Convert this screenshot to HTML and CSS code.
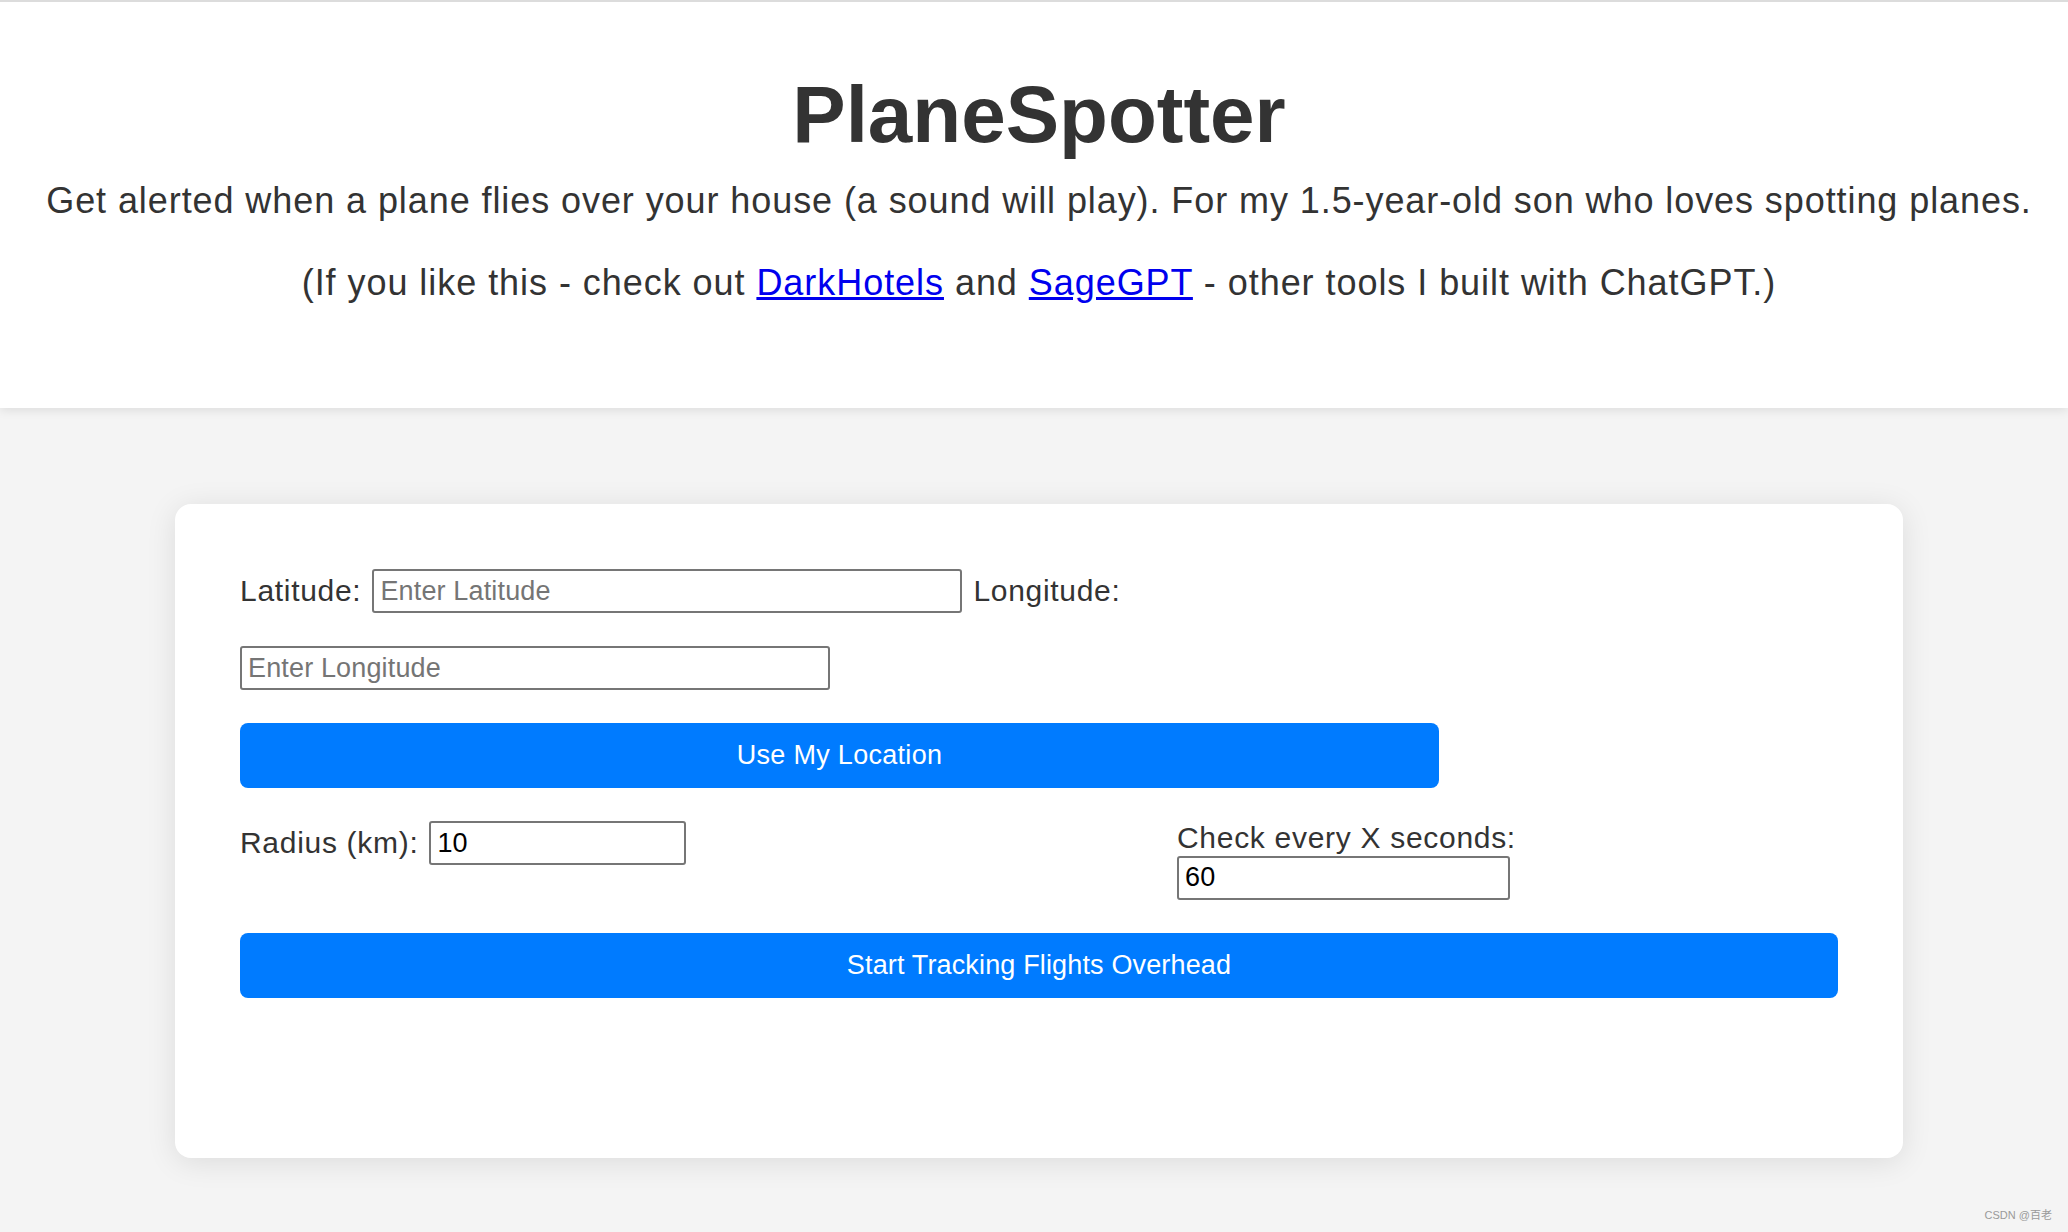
FILE: index.html
```html
<!DOCTYPE html>
<html lang="en">
<head>
<meta charset="utf-8">
<title>PlaneSpotter</title>
<link rel="stylesheet" href="styles.css">
</head>
<body>
<header class="site-header">
  <h1 class="title">PlaneSpotter</h1>
  <p class="lead">Get alerted when a plane flies over your house (a sound will play). For my 1.5-year-old son who loves spotting planes.</p>
  <p class="lead lead-second">(If you like this - check out <a href="#">DarkHotels</a> and <a href="#">SageGPT</a> - other tools I built with ChatGPT.)</p>
</header>
<main class="main">
  <section class="card">
    <div class="coords">
      <label class="label" for="lat">Latitude:</label>
      <input class="field field-wide" id="lat" type="text" placeholder="Enter Latitude">
      <label class="label" for="lon">Longitude:</label>
      <input class="field field-wide" id="lon" type="text" placeholder="Enter Longitude">
    </div>
    <button class="btn btn-location" type="button">Use My Location</button>
    <div class="settings">
      <div class="setting-radius">
        <label class="label" for="radius">Radius (km):</label>
        <input class="field field-radius" id="radius" type="text" value="10">
      </div>
      <div class="setting-interval">
        <label class="label" for="interval">Check every X seconds:</label>
        <input class="field field-interval" id="interval" type="text" value="60">
      </div>
    </div>
    <button class="btn btn-start" type="button">Start Tracking Flights Overhead</button>
  </section>
</main>
<div class="watermark">CSDN @百老</div>
</body>
</html>
```
FILE: styles.css
```css
* { box-sizing: border-box; }

html, body {
  margin: 0;
  padding: 0;
}

body {
  background: #f4f4f4;
  font-family: "Liberation Sans", Arial, sans-serif;
  color: #333;
  min-height: 1232px;
  position: relative;
}

.site-header {
  background: #fff;
  border-top: 2px solid #dcdcdc;
  padding: 67px 0 105px 10px;
  text-align: center;
  box-shadow: 0 2px 10px rgba(0, 0, 0, 0.1);
  position: relative;
}

.title {
  margin: 0;
  font-size: 80px;
  line-height: 92px;
  font-weight: bold;
  color: #333;
}

.lead {
  margin: 19px 0 0;
  font-size: 36px;
  line-height: 41px;
  color: #333;
  letter-spacing: 0.92px;
}

.lead-second {
  margin-top: 41px;
  letter-spacing: 0.95px;
}

.lead a { color: #0000ee; }

.main {
  padding: 96px 0 0 10px;
}

.card {
  width: 1728px;
  margin: 0 auto;
  background: #fff;
  border-radius: 16px;
  box-shadow: 0 4px 30px rgba(0, 0, 0, 0.1);
  padding: 65px 65px 160px;
  display: flex;
  flex-direction: column;
  gap: 33px;
}

.label {
  font-size: 30px;
  line-height: 34.5px;
  color: #333;
  letter-spacing: 0.7px;
}

.field {
  font-family: "Liberation Sans", Arial, sans-serif;
  font-size: 27px;
  height: 44px;
  border: 2px solid #767676;
  border-radius: 3px;
  padding: 0 3px 0 6px;
  color: #000;
  background: #fff;
  margin: 0;
  letter-spacing: 0.15px;
}

.field::placeholder { color: #757575; }

.coords {
  width: 1199px;
  display: flex;
  flex-wrap: wrap;
  align-items: center;
  column-gap: 11px;
  row-gap: 33px;
}

.field-wide { width: 590px; }

.btn {
  font-family: "Liberation Sans", Arial, sans-serif;
  font-size: 27px;
  color: #fff;
  background: #007bff;
  border: none;
  border-radius: 8px;
  height: 65px;
  padding: 0;
}

.btn-location {
  width: 1199px;
  letter-spacing: 0.3px;
}

.btn-start {
  width: 100%;
  letter-spacing: 0.15px;
}

.settings {
  display: flex;
  justify-content: space-between;
  align-items: flex-start;
}

.setting-radius {
  display: flex;
  align-items: center;
  gap: 11px;
}

.field-radius { width: 257px; }

.setting-interval {
  width: 661px;
  display: flex;
  flex-direction: column;
  align-items: flex-start;
}

.field-interval { width: 333px; }

.watermark {
  position: absolute;
  right: 16px;
  bottom: 10px;
  font-family: "Liberation Sans", Arial, "Noto Sans CJK SC", sans-serif;
  font-size: 11px;
  color: #9a9a9a;
}
```
